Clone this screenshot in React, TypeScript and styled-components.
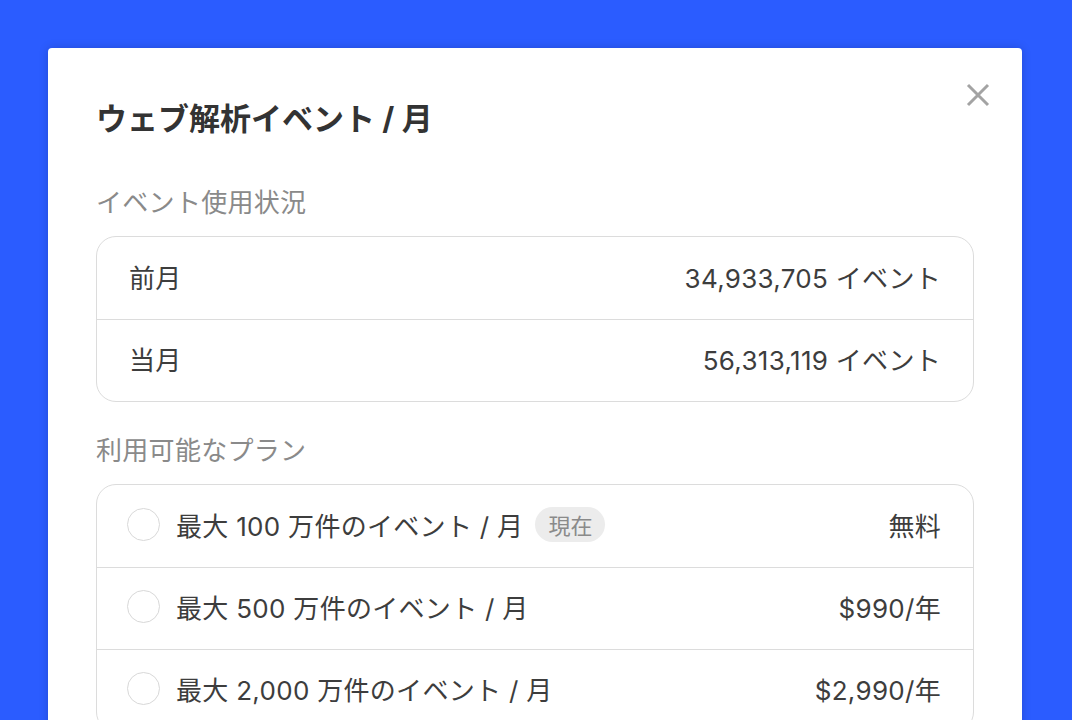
import React from "react";
import styled, { createGlobalStyle } from "styled-components";

const GlobalStyle = createGlobalStyle`
  html, body {
    margin: 0;
    padding: 0;
    background: #2b5cff;
    font-family: Inter, "Noto Sans CJK JP", sans-serif;
    overflow: hidden;
  }
  * { box-sizing: border-box; }
`;

const Page = styled.div`
  height: 100vh;
  padding: 48px 50px 0 48px;
  overflow: hidden;
`;

const Modal = styled.div`
  position: relative;
  background: #ffffff;
  border-radius: 4px;
  box-shadow: 0 0 10px rgba(0, 0, 20, 0.18);
  padding: 48px 48px 60px 48px;
  min-height: 900px;
`;

const CloseButton = styled.button`
  position: absolute;
  top: 35px;
  right: 32px;
  width: 24px;
  height: 24px;
  padding: 0;
  border: none;
  background: transparent;
  display: flex;
  align-items: center;
  justify-content: center;
  cursor: pointer;
`;

const Title = styled.h1`
  margin: 0;
  font-size: 31px;
  line-height: 45px;
  font-weight: 700;
  color: #333333;
`;

const SectionLabel = styled.h2<{ $first?: boolean }>`
  margin: ${(p) => (p.$first ? "42px" : "29px")} 0 14px 0;
  font-size: 26px;
  line-height: 39px;
  font-weight: 400;
  letter-spacing: 0.3px;
  color: #8a8a8a;
`;

const Card = styled.div`
  border: 1px solid #dcdcdc;
  border-radius: 20px;
  overflow: hidden;
`;

const Row = styled.div`
  height: 82px;
  display: flex;
  align-items: center;
  justify-content: space-between;
  padding: 0 32px 4px 32px;
  font-size: 26px;
  letter-spacing: 0.3px;
  color: #3d3d3d;
  & + & {
    border-top: 1px solid #dcdcdc;
  }
`;

const PlanRow = styled(Row)`
  padding-left: 30px;
`;

const PlanLeft = styled.div`
  display: flex;
  align-items: center;
`;

const Radio = styled.span`
  width: 33px;
  height: 33px;
  border-radius: 50%;
  border: 1.5px solid #d8d8d8;
  background: #fff;
  margin-right: 16px;
  flex-shrink: 0;
`;

const Badge = styled.span`
  margin-left: 12px;
  height: 35px;
  padding: 0 13px;
  border-radius: 18px;
  background: #ececec;
  color: #8a8a8a;
  font-size: 22px;
  letter-spacing: 0;
  display: inline-flex;
  align-items: center;
`;

const Value = styled.span`
  color: #3d3d3d;
`;

const usage = [
  { label: "前月", value: "34,933,705 イベント" },
  { label: "当月", value: "56,313,119 イベント" },
];

const plans = [
  { label: "最大 100 万件のイベント / 月", price: "無料", current: true },
  { label: "最大 500 万件のイベント / 月", price: "$990/年" },
  { label: "最大 2,000 万件のイベント / 月", price: "$2,990/年" },
];

export default function App() {
  return (
    <>
      <GlobalStyle />
      <Page>
        <Modal>
          <CloseButton aria-label="閉じる">
            <svg width="24" height="24" viewBox="0 0 24 24">
              <path
                d="M2 2 L22 22 M22 2 L2 22"
                stroke="#a3a3a3"
                strokeWidth="3"
                strokeLinecap="butt"
                fill="none"
              />
            </svg>
          </CloseButton>
          <Title>ウェブ解析イベント / 月</Title>
          <SectionLabel $first>イベント使用状況</SectionLabel>
          <Card>
            {usage.map((u) => (
              <Row key={u.label}>
                <span>{u.label}</span>
                <Value>{u.value}</Value>
              </Row>
            ))}
          </Card>
          <SectionLabel>利用可能なプラン</SectionLabel>
          <Card>
            {plans.map((p) => (
              <PlanRow key={p.label}>
                <PlanLeft>
                  <Radio />
                  <span>{p.label}</span>
                  {p.current && <Badge>現在</Badge>}
                </PlanLeft>
                <Value>{p.price}</Value>
              </PlanRow>
            ))}
          </Card>
        </Modal>
      </Page>
    </>
  );
}
